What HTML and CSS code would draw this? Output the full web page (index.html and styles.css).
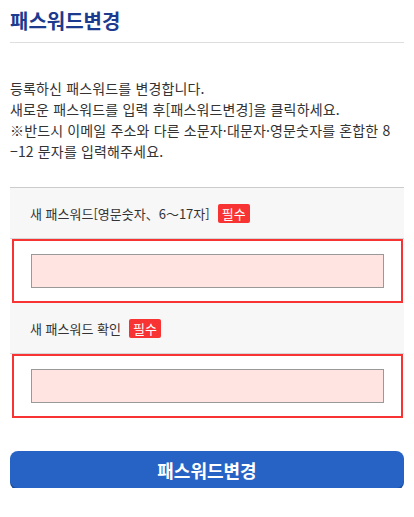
FILE: index.html
```html
<!DOCTYPE html>
<html lang="ko">
<head>
  <meta charset="UTF-8">
  <meta name="viewport" content="width=device-width, initial-scale=1.0">
  <title>패스워드변경</title>
  <link rel="stylesheet" href="styles.css">
</head>
<body>
  <div class="container">
    <h2 class="titre">패스워드변경</h2>

    <p class="aide">
      등록하신 패스워드를 변경합니다.<br>
      새로운 패스워드를 입력 후[패스워드변경]을 클릭하세요.<br>
      ※반드시 이메일 주소와 다른 소문자·대문자·영문숫자를 혼합한 8<br>
      −12 문자를 입력해주세요.
    </p>

    <div class="formulaire">
      <div class="libelle">
        <span>새 패스워드[영문숫자、6～17자]</span>
        <span class="requis">필수</span>
      </div>
      <div class="champ">
        <input type="password" id="mdp1">
      </div>

      <div class="libelle">
        <span>새 패스워드 확인</span>
        <span class="requis">필수</span>
      </div>
      <div class="champ">
        <input type="password" id="mdp2">
      </div>
    </div>

    <button class="bouton">패스워드변경</button>
  </div>
</body>
</html>
```

FILE: styles.css
```css
body {
  margin: 0;
  padding: 0 10px;
  background: #fff;
  font-family: "Noto Sans CJK KR", "Noto Sans", sans-serif;
  color: #333;
}

.titre {
  margin: 0;
  padding: 9px 0 9px;
  font-size: 20px;
  line-height: 24px;
  color: #1c3a8e;
  border-bottom: 1px solid #dedede;
}

.aide {
  margin: 0;
  padding: 35px 0 25px;
  font-size: 14px;
  line-height: 21px;
  color: #333;
  letter-spacing: 0.15px;
}

.formulaire {
  border-top: 1px solid #ccc;
}

.libelle {
  display: flex;
  align-items: center;
  gap: 8px;
  height: 50px;
  padding: 0 20px;
  background: #f7f7f7;
  border-bottom: 1px solid #d6d6d6;
  font-size: 13px;
  color: #333;
}

.requis {
  background: #f73333;
  color: #fff;
  font-size: 13px;
  line-height: 19px;
  padding: 0 4px;
  border-radius: 2px;
}

.champ {
  margin: 0 1px 0 2px;
  padding: 13px 17px;
  border: 2px solid #f73333;
  background: #fff;
}

.champ input {
  display: block;
  width: 100%;
  height: 34px;
  box-sizing: border-box;
  margin: 0;
  border: 1px solid #999;
  background: #ffe4e1;
}

.bouton {
  display: block;
  width: 100%;
  height: 37px;
  margin-top: 33px;
  border: none;
  border-radius: 8px;
  background: #2763c5;
  box-shadow: 0 2px 0 #1a4b9c;
  color: #fff;
  font-family: inherit;
  font-size: 18px;
  font-weight: bold;
}
```
